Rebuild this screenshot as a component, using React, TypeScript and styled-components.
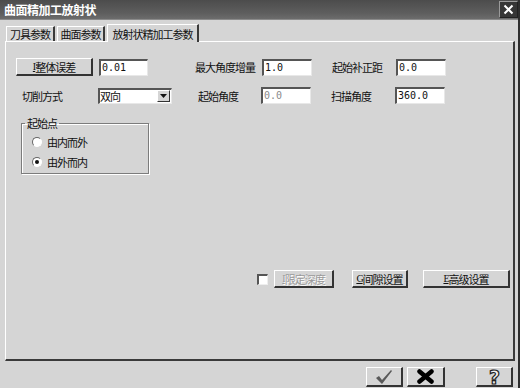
import styled, { createGlobalStyle } from 'styled-components'

const GlobalStyle = createGlobalStyle`
  html, body {
    margin: 0;
    padding: 0;
    background: #d4d4d4;
  }
  body {
    font-family: "Noto Sans CJK SC", "Liberation Sans", sans-serif;
    font-size: 11px;
    color: #111;
  }
`

const Window = styled.div`
  width: 520px;
  height: 388px;
  display: flex;
  flex-direction: column;
  background: #d5d5d5;
  border-right: 2px solid #2e2e2e;
  box-sizing: border-box;
  overflow: hidden;
`

const TitleBar = styled.div`
  height: 19px;
  flex: none;
  display: flex;
  align-items: center;
  justify-content: space-between;
  padding: 0 0 0 4px;
  background: linear-gradient(#4c4c4c, #5e5e5e 70%, #6c6c6c);
  border-bottom: 1px solid #8a8a8a;
  color: #fff;
  font-weight: bold;
  font-size: 12px;
  letter-spacing: -0.5px;
`

const CloseBtn = styled.div`
  width: 17px;
  height: 15px;
  display: flex;
  align-items: center;
  justify-content: center;
  background: #363636;
  border: 1px solid #9a9a9a;
  border-right-color: #222;
  border-bottom-color: #222;
`

const Body = styled.div`
  flex: 1;
  display: flex;
  flex-direction: column;
  padding: 0 3px 0 5px;
`

const TabRow = styled.div`
  height: 21px;
  display: flex;
  align-items: flex-end;
  padding-left: 1px;
  gap: 2px;
`

const Tab = styled.div<{ w: number; active?: boolean }>`
  width: ${(p) => p.w}px;
  height: ${(p) => (p.active ? 18 : 15)}px;
  margin-bottom: ${(p) => (p.active ? -1 : 0)}px;
  display: flex;
  align-items: center;
  justify-content: center;
  box-sizing: border-box;
  background: #d5d5d5;
  border-top: 1px solid #fff;
  border-left: 1px solid #fff;
  border-right: 2px solid #3a3a3a;
  position: relative;
  z-index: ${(p) => (p.active ? 2 : 1)};
  letter-spacing: -1px;
`

const Panel = styled.div`
  height: 320px;
  box-sizing: border-box;
  display: flex;
  flex-direction: column;
  border-top: 1px solid #fff;
  border-left: 1px solid #fff;
  border-right: 2px solid #3a3a3a;
  border-bottom: 2px solid #3a3a3a;
  padding: 16px 3px 71px 10px;
`

const Row = styled.div<{ mt?: number; h: number }>`
  display: flex;
  align-items: center;
  height: ${(p) => p.h}px;
  margin-top: ${(p) => p.mt ?? 0}px;
`

const Label = styled.div<{ w: number; indent?: number }>`
  width: ${(p) => p.w}px;
  padding-left: ${(p) => p.indent ?? 0}px;
  box-sizing: border-box;
  flex: none;
  letter-spacing: -1px;
  white-space: nowrap;
`

const Spacer = styled.div<{ w: number }>`
  width: ${(p) => p.w}px;
  flex: none;
`

const Grow = styled.div`
  flex: 1;
`

const Input = styled.div<{ w: number; dim?: boolean }>`
  width: ${(p) => p.w}px;
  height: 17px;
  flex: none;
  box-sizing: border-box;
  background: #fff;
  border-top: 2px solid #555;
  border-left: 2px solid #555;
  border-right: 1px solid #e8e8e8;
  border-bottom: 1px solid #e8e8e8;
  padding-left: 1px;
  font-family: "DejaVu Sans Mono", "Liberation Mono", monospace;
  font-size: 10px;
  line-height: 14px;
  color: ${(p) => (p.dim ? '#8a8a8a' : '#111')};
`

const Button = styled.div<{ w: number; disabled?: boolean }>`
  width: ${(p) => p.w}px;
  height: 18px;
  flex: none;
  box-sizing: border-box;
  display: flex;
  align-items: center;
  justify-content: center;
  background: #d5d5d5;
  border-top: 1px solid #fff;
  border-left: 1px solid #fff;
  border-right: 2px solid #333;
  border-bottom: 2px solid #333;
  letter-spacing: -1px;
  color: ${(p) => (p.disabled ? '#9a9a9a' : '#111')};
  text-shadow: ${(p) => (p.disabled ? '1px 1px 0 #fff' : 'none')};
  u {
    font-family: "Liberation Serif", serif;
    font-size: 10px;
  }
`

const Select = styled.div`
  width: 74px;
  height: 16px;
  flex: none;
  box-sizing: border-box;
  display: flex;
  align-items: center;
  justify-content: space-between;
  background: #fff;
  border-top: 2px solid #555;
  border-left: 2px solid #555;
  border-right: 1px solid #e8e8e8;
  border-bottom: 1px solid #e8e8e8;
  letter-spacing: -1px;
`

const DropBtn = styled.div`
  width: 13px;
  height: 12px;
  box-sizing: border-box;
  display: flex;
  align-items: center;
  justify-content: center;
  background: #d5d5d5;
  border-top: 1px solid #fff;
  border-left: 1px solid #fff;
  border-right: 1px solid #333;
  border-bottom: 1px solid #333;
  margin-right: 1px;
`

const Group = styled.fieldset`
  width: 128px;
  height: 57px;
  box-sizing: border-box;
  margin: 13px 0 0 5px;
  padding: 6px 0 0 10px;
  border: 1px solid #7c7c7c;
  box-shadow: inset 1px 1px 0 #fff, 1px 1px 0 #fff;
  display: flex;
  flex-direction: column;
  gap: 6px;
  legend {
    margin-left: -7px;
    padding: 0 2px;
    letter-spacing: -1px;
    line-height: 12px;
  }
`

const RadioRow = styled.div`
  display: flex;
  align-items: center;
  gap: 5px;
  height: 14px;
  letter-spacing: -1px;
`

const RadioDot = styled.span<{ checked?: boolean }>`
  width: 10px;
  height: 10px;
  box-sizing: border-box;
  border-radius: 50%;
  border: 1px solid;
  border-color: #666 #fff #fff #666;
  background: #fff;
  display: flex;
  align-items: center;
  justify-content: center;
  &::after {
    content: '';
    width: 4px;
    height: 4px;
    border-radius: 50%;
    background: ${(p) => (p.checked ? '#111' : 'transparent')};
  }
`

const CheckBox = styled.span`
  width: 11px;
  height: 11px;
  box-sizing: border-box;
  flex: none;
  background: #fff;
  border-top: 2px solid #555;
  border-left: 2px solid #555;
  border-right: 1px solid #eee;
  border-bottom: 1px solid #eee;
`

const Footer = styled.div`
  flex: 1;
  display: flex;
  justify-content: flex-end;
  align-items: flex-start;
  padding: 6px 2px 0 0;
  gap: 4px;
`

const FootBtn = styled(Button)<{ ml?: number }>`
  height: 20px;
  margin-left: ${(p) => p.ml ?? 0}px;
`

const Help = styled.span`
  font-family: "DejaVu Sans", sans-serif;
  font-weight: bold;
  font-size: 19px;
  line-height: 18px;
  color: #f2f2f2;
  -webkit-text-stroke: 1.2px #222;
`

function App() {
  return (
    <>
      <GlobalStyle />
      <Window>
        <TitleBar>
          <span>曲面精加工放射状</span>
          <CloseBtn>
            <svg width="11" height="11" viewBox="0 0 11 11">
              <path d="M1.5 1.5 L9.5 9.5 M9.5 1.5 L1.5 9.5" stroke="#fff" strokeWidth="2" />
            </svg>
          </CloseBtn>
        </TitleBar>
        <Body>
          <TabRow>
            <Tab w={49}>刀具参数</Tab>
            <Tab w={48}>曲面参数</Tab>
            <Tab w={92} active>
              放射状精加工参数
            </Tab>
          </TabRow>
          <Panel>
            <Row h={18}>
              <Button w={77}>
                <u>I</u>整体误差
              </Button>
              <Spacer w={6} />
              <Input w={49}>0.01</Input>
              <Spacer w={47} />
              <Label w={67}>最大角度增量</Label>
              <Input w={50}>1.0</Input>
              <Spacer w={20} />
              <Label w={64}>起始补正距</Label>
              <Input w={50}>0.0</Input>
            </Row>
            <Row h={17} mt={11}>
              <Label w={82} indent={6}>
                切削方式
              </Label>
              <Select>
                <span>双向</span>
                <DropBtn>
                  <svg width="7" height="4" viewBox="0 0 7 4">
                    <path d="M0 0 H7 L3.5 4 Z" fill="#111" />
                  </svg>
                </DropBtn>
              </Select>
              <Spacer w={22} />
              <Label w={67} indent={4}>
                起始角度
              </Label>
              <Input w={50} dim>
                0.0
              </Input>
              <Spacer w={20} />
              <Label w={64}>扫描角度</Label>
              <Input w={50}>360.0</Input>
            </Row>
            <Group>
              <legend>起始点</legend>
              <RadioRow>
                <RadioDot />
                由内而外
              </RadioRow>
              <RadioRow>
                <RadioDot checked />
                由外而内
              </RadioRow>
            </Group>
            <Grow />
            <Row h={18}>
              <Grow />
              <CheckBox />
              <Spacer w={6} />
              <Button w={60} disabled>
                <u>I</u>限定深度
              </Button>
              <Spacer w={18} />
              <Button w={56}>
                <u>G</u>间隙设置
              </Button>
              <Spacer w={15} />
              <Button w={87}>
                <u>E</u>高级设置
              </Button>
            </Row>
          </Panel>
          <Footer>
            <FootBtn w={37}>
              <svg width="18" height="16" viewBox="0 0 18 16">
                <path d="M1 9 L4 7 L7 11 L16 1 L17 2 L7 15 Z" fill="#5a5a5a" />
              </svg>
            </FootBtn>
            <FootBtn w={38}>
              <svg width="17" height="15" viewBox="0 0 17 15">
                <path d="M2.5 2.5 L14.5 12.5 M14.5 2.5 L2.5 12.5" stroke="#000" strokeWidth="4.5" strokeLinecap="round" />
              </svg>
            </FootBtn>
            <FootBtn w={37} ml={27}>
              <Help>?</Help>
            </FootBtn>
          </Footer>
        </Body>
      </Window>
    </>
  )
}

export default App
